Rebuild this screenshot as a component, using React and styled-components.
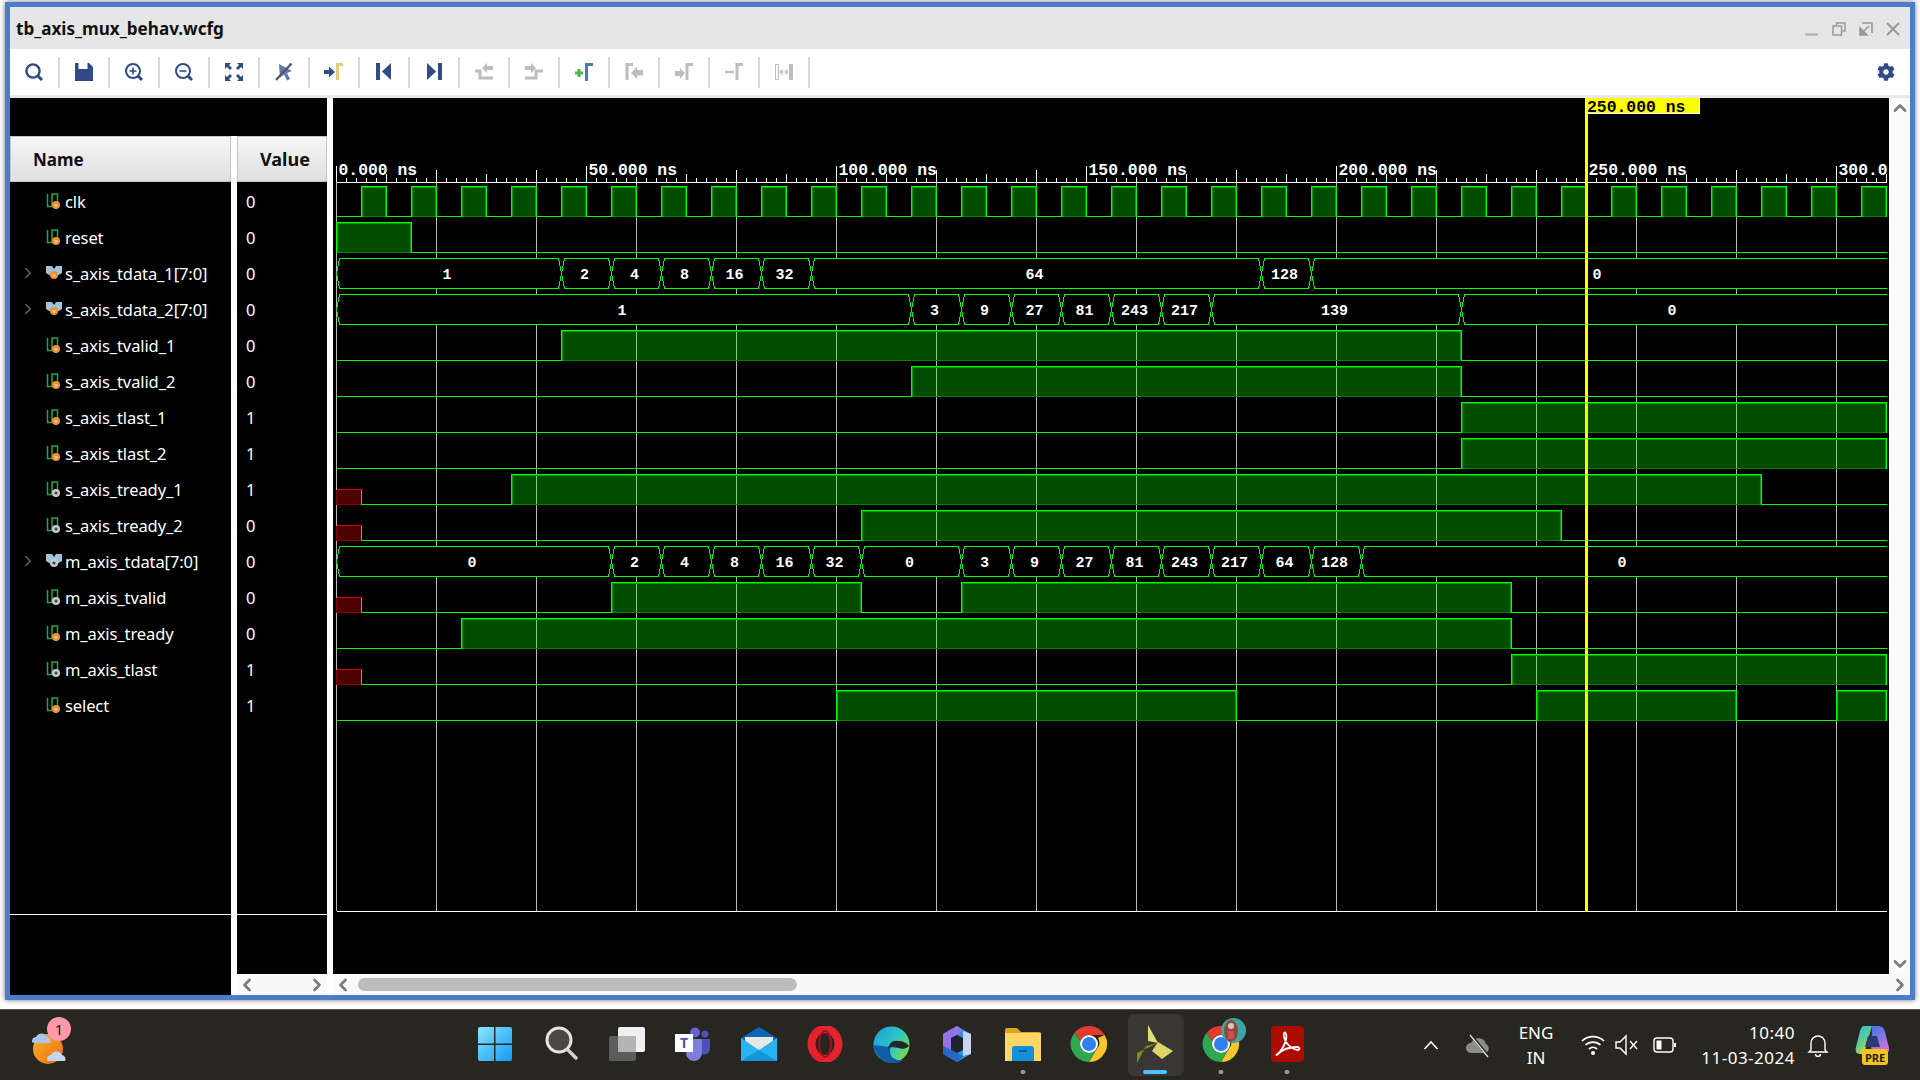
import React from "react";
import styled, { createGlobalStyle } from "styled-components";
import { ChevronLeft, ChevronRight, ChevronUp, ChevronDown } from "lucide-react";
import { FaCog } from "react-icons/fa";

const GlobalStyle = createGlobalStyle`
  html, body {
    margin: 0;
    padding: 0;
    background: #ffffff;
    overflow: hidden;
  }
  * { box-sizing: border-box; }
`;

const NAVY = "#2f4a85";
const GREY = "#bdbdbd";
const UI_FONT = `"Noto Sans", "Open Sans", sans-serif`;
const MONO = `"Liberation Mono", "DejaVu Sans Mono", monospace`;

const Page = styled.div`
  width: 1920px;
  height: 1080px;
  display: flex;
  flex-direction: column;
  font-family: ${UI_FONT};
`;
const Desktop = styled.div`
  height: 1009px;
  padding: 2px 5px 0;
  background: #ffffff;
`;
const Win = styled.div`
  height: 998px;
  border: 5px solid #4a7dcc;
  box-shadow: 0 0 5px rgba(0, 0, 0, 0.55);
  display: flex;
  flex-direction: column;
  background: #ffffff;
`;
const TitleBar = styled.div`
  height: 42px;
  background: #e6e6e6;
  display: flex;
  align-items: center;
  padding: 0 4px 0 6px;
`;
const Title = styled.div`
  font-weight: 700;
  font-size: 17.1px;
  color: #111;
  flex: 1;
`;
const WinControls = styled.div`
  display: flex;
  padding-top: 2px;
`;
const WinBtn = styled.div`
  width: 27px;
  height: 20px;
  display: flex;
  align-items: center;
  justify-content: center;
`;
const Toolbar = styled.div`
  height: 46px;
  display: flex;
  align-items: center;
  background: #ffffff;
`;
const ToolBtn = styled.div`
  width: 50px;
  height: 31px;
  display: flex;
  align-items: center;
  justify-content: center;
  border-right: 2px solid #d9d9d9;
`;
const ToolEnd = styled.div`
  margin-left: auto;
  margin-right: 15px;
  display: flex;
`;
const Divider = styled.div`
  height: 3px;
  background: #e8e8e8;
`;
const Body = styled.div`
  flex: 1;
  display: flex;
  gap: 6px;
  background: #ffffff;
  min-height: 0;
`;
const TreeSide = styled.div`
  width: 317px;
  flex: none;
  display: flex;
  flex-direction: column;
`;
const TreeTop = styled.div`
  height: 38px;
  flex: none;
  background: #000;
`;
const TreePanes = styled.div`
  flex: 1;
  display: flex;
  gap: 6px;
  min-height: 0;
`;
const Pane = styled.div`
  width: ${(p) => p.$w}px;
  display: flex;
  flex-direction: column;
  background: #000;
`;
const Header = styled.div`
  height: 46px;
  flex: none;
  background: linear-gradient(#f6f6f6, #dfdfdf);
  border: 1px solid #c4c4c4;
  font-weight: 700;
  font-size: ${(p) => p.$size}px;
  color: #111;
  display: flex;
  align-items: center;
  padding-left: ${(p) => p.$pad}px;
`;
const Rows = styled.div`
  padding-top: 1px;
  height: 732px;
  flex: none;
`;
const Row = styled.div`
  height: 36px;
  display: flex;
  align-items: center;
  color: #fff;
  font-size: 16.5px;
`;
const Twist = styled.div`
  width: 36px;
  display: flex;
  justify-content: flex-end;
  padding-right: 9px;
  color: #6e6e6e;
  height: 18px;
  align-items: center;
`;
const SigLabel = styled.span`
  margin-left: 3px;
  letter-spacing: -0.1px;
`;
const ValueRow = styled(Row)`
  padding-left: 9px;
`;
const PaneFoot = styled.div`
  flex: 1;
  border-top: 1px solid #fff;
`;
const HScroll = styled.div`
  height: 21px;
  flex: none;
  background: #f9f9f9;
  display: flex;
  align-items: center;
  justify-content: space-between;
  color: #7a7a7a;
`;
const WaveCol = styled.div`
  flex: 1;
  display: flex;
  flex-direction: column;
  min-width: 0;
`;
const WaveTop = styled.div`
  flex: 1;
  display: flex;
  min-height: 0;
`;
const VScroll = styled.div`
  width: 21px;
  background: #fbfbfb;
  display: flex;
  flex-direction: column;
  justify-content: space-between;
  align-items: center;
  color: #7a7a7a;
`;
const Thumb = styled.div`
  width: 439px;
  height: 13px;
  border-radius: 7px;
  background: #bcbcbc;
  margin-left: 5px;
`;
const ThumbTrack = styled.div`
  flex: 1;
  display: flex;
`;

const Taskbar = styled.div`
  height: 71px;
  background: #282620;
  border-top: 1px solid #55534e;
  display: flex;
  align-items: center;
  color: #fff;
`;
const Weather = styled.div`
  width: 462px;
  padding-left: 30px;
  height: 70px;
  display: flex;
  align-items: center;
`;
const WeatherIcon = styled.div`
  position: relative;
  width: 40px;
  height: 46px;
  margin-top: 6px;
`;
const Badge = styled.div`
  position: absolute;
  left: 17px;
  top: -8px;
  width: 24px;
  height: 24px;
  border-radius: 50%;
  background: #ff98a8;
  color: #1c1c1c;
  font-size: 15px;
  line-height: 24px;
  text-align: center;
`;
const AppSlot = styled.div`
  position: relative;
  width: 66px;
  height: 70px;
  display: flex;
  align-items: center;
  justify-content: center;
  padding-bottom: 2px;
`;
const ActiveBg = styled.div`
  position: absolute;
  left: 6px;
  right: 6px;
  top: 4px;
  bottom: 4px;
  border-radius: 6px;
  background: #393733;
  box-shadow: 2px 0 0 #33312d;
`;
const RunDot = styled.div`
  position: absolute;
  bottom: 6px;
  left: 50%;
  transform: translateX(-50%);
  height: 4px;
  width: ${(p) => (p.$active ? 24 : 5)}px;
  border-radius: 3px;
  background: ${(p) => (p.$active ? "#4cc2ff" : "#9a9a9a")};
`;
const SlotIcon = styled.div`
  position: relative;
  display: flex;
`;
const Tray = styled.div`
  margin-left: 95px;
  display: flex;
  align-items: center;
  height: 70px;
`;
const TrayItem = styled.div`
  width: ${(p) => p.$w}px;
  margin-left: ${(p) => p.$ml || 0}px;
  display: flex;
  justify-content: center;
  align-items: center;
`;
const TrayText = styled.div`
  width: ${(p) => p.$w}px;
  margin-left: ${(p) => p.$ml || 0}px;
  text-align: ${(p) => p.$align};
  font-size: 17px;
  letter-spacing: ${(p) => p.$spacing || 0}px;
  line-height: 25px;
  color: #fff;
`;

/* ---------- waveform data ---------- */

const X = (t) => 336.5 + 5 * t;
const END = 310;
const BRIGHT = "#00ff00";

const BITS = {
  4: { high: [[45, 225]] },
  5: { high: [[115, 225]] },
  6: { high: [[225, 310]] },
  7: { high: [[225, 310]] },
  8: { unk: true, high: [[35, 285]] },
  9: { unk: true, high: [[105, 245]] },
  11: { unk: true, high: [[55, 105], [125, 235]] },
  12: { high: [[25, 235]] },
  13: { unk: true, high: [[235, 310]] },
  14: { high: [[100, 180], [240, 280], [300, 310]] },
  1: { high: [[0, 15]] },
  0: { high: Array.from({ length: 31 }, (_, i) => [5 + i * 10, 10 + i * 10]) },
};

const seq = (start, vals, step = 10) => vals.map((v, i) => [start + i * step, start + (i + 1) * step, v]);

const BUSES = {
  2: [[0, 45, "1"], ...seq(45, ["2", "4", "8", "16", "32"]), [95, 185, "64"], [185, 195, "128"], [195, 310, "0"]],
  3: [[0, 115, "1"], ...seq(115, ["3", "9", "27", "81", "243", "217"]), [175, 225, "139"], [225, 310, "0"]],
  10: [
    [0, 55, "0"],
    ...seq(55, ["2", "4", "8", "16", "32"]),
    [105, 125, "0"],
    ...seq(125, ["3", "9", "27", "81", "243", "217", "64", "128"]),
    [205, 310, "0"],
  ],
};

const SIGNALS = [
  { name: "clk", kind: "v", val: 0 },
  { name: "reset", kind: "v", val: 0 },
  { name: "s_axis_tdata_1[7:0]", kind: "bv", val: 0 },
  { name: "s_axis_tdata_2[7:0]", kind: "bv", val: 0 },
  { name: "s_axis_tvalid_1", kind: "v", val: 0 },
  { name: "s_axis_tvalid_2", kind: "v", val: 0 },
  { name: "s_axis_tlast_1", kind: "v", val: 1 },
  { name: "s_axis_tlast_2", kind: "v", val: 1 },
  { name: "s_axis_tready_1", kind: "g", val: 1 },
  { name: "s_axis_tready_2", kind: "g", val: 0 },
  { name: "m_axis_tdata[7:0]", kind: "bg", val: 0 },
  { name: "m_axis_tvalid", kind: "g", val: 0 },
  { name: "m_axis_tready", kind: "v", val: 0 },
  { name: "m_axis_tlast", kind: "g", val: 1 },
  { name: "select", kind: "v", val: 1 },
];

function BitRow({ row, high, unk }) {
  const top = 186.5 + 36 * row;
  const low = top + 30;
  const start = unk ? 5 : 0;
  const lows = [];
  let cur = start;
  high.forEach(([a, b]) => {
    if (a > cur) lows.push([cur, a]);
    cur = b;
  });
  if (cur < END) lows.push([cur, END]);
  return (
    <g>
      {unk && (
        <g>
          <rect x={X(0)} y={top + 15} width={25} height={15} fill="#4d0000" />
          <path d={`M${X(0)} ${low}H${X(5)}M${X(0)} ${top + 15}V${low}`} stroke="#8a0000" fill="none" />
          <path d={`M${X(0)} ${top + 15}H${X(5)}`} stroke="#e00000" fill="none" />
          <path d={`M${X(5)} ${top + 15}V${low}`} stroke={BRIGHT} fill="none" />
        </g>
      )}
      {lows.map(([a, b]) => (
        <path key={a} d={`M${X(a)} ${low}H${X(b)}`} stroke={BRIGHT} fill="none" />
      ))}
      {high.map(([a, b]) => (
        <g key={a}>
          <rect x={X(a)} y={top} width={X(b) - X(a)} height={30} fill="rgba(0,255,0,0.3)" />
          <path d={`M${X(a)} ${low}H${X(b)}`} stroke="#0a800a" fill="none" />
          <path
            d={`M${X(a) + 1} ${low}V${top + 1}H${X(b) - 1}V${low}`}
            stroke="#00a000"
            fill="none"
          />
          <path d={`M${X(a)} ${low}V${top}H${X(b)}V${low}`} stroke={BRIGHT} fill="none" />
        </g>
      ))}
    </g>
  );
}

function BusRow({ row, segs }) {
  const top = 186.5 + 36 * row;
  const bot = top + 30;
  const mid = top + 15;
  return (
    <g>
      {segs.map(([a, b]) => {
        const l = X(a);
        const r = X(b);
        const d =
          b === END
            ? `M${r} ${top}H${l + 3}L${l} ${mid}L${l + 3} ${bot}H${r}`
            : `M${l} ${mid}L${l + 3} ${top}H${r - 3}L${r} ${mid}L${r - 3} ${bot}H${l + 3}Z`;
        return <path key={a} d={d} fill="#000" stroke={BRIGHT} />;
      })}
    </g>
  );
}

function BusLabels({ row, segs }) {
  const base = 186.5 + 36 * row + 20;
  return (
    <g fontFamily={MONO} fontWeight="700" fontSize="15" fill="#fff" textAnchor="middle">
      {segs.map(([a, b, v]) => (
        <text key={a} x={(X(a) + X(b)) / 2 - 2} y={base}>
          {v}
        </text>
      ))}
    </g>
  );
}

function Ticks() {
  let d = "";
  for (let t = 0; t <= END; t += 2) {
    let from = 178;
    if (t % 50 === 0) from = 166;
    else if (t % 100 === 60) from = 177;
    else if (t % 20 === 0) from = 170;
    else if (t % 10 === 0) from = 174;
    d += `M${X(t)} ${from}V182`;
  }
  return <path d={d} stroke="#fff" fill="none" />;
}

function Waves() {
  const labels = ["0.000 ns", "50.000 ns", "100.000 ns", "150.000 ns", "200.000 ns", "250.000 ns", "300.0"];
  const grid = [];
  for (let t = 0; t <= 300; t += 20) grid.push(t);
  return (
    <svg width="1556" height="876" viewBox="333 98 1556 876" style={{ display: "block", background: "#000" }}>
      <g shapeRendering="crispEdges">
        {grid.map((t) => (
          <path key={t} d={`M${X(t)} 182V911`} stroke="#b8b8b8" fill="none" />
        ))}
        <path d={`M${X(0)} 911.5H${X(END)}M${X(0)} 182.5H${X(END)}`} stroke="#fff" fill="none" />
        <Ticks />
        {Object.entries(BITS).map(([row, b]) => (
          <BitRow key={row} row={Number(row)} high={b.high} unk={b.unk} />
        ))}
        {Object.entries(BUSES).map(([row, segs]) => (
          <BusRow key={row} row={Number(row)} segs={segs} />
        ))}
      </g>
      {Object.entries(BUSES).map(([row, segs]) => (
        <BusLabels key={row} row={Number(row)} segs={segs} />
      ))}
      <g fontFamily={MONO} fontWeight="700" fontSize="16.4" fill="#fff">
        {labels.map((label, i) => (
          <text key={label} x={X(i * 50) + 2} y={175}>
            {label}
          </text>
        ))}
      </g>
      <rect x="1585" y="98" width="3" height="814" fill="#ffff00" shapeRendering="crispEdges" />
      <rect x="1585.5" y="97.5" width="114" height="16" fill="#ffff00" stroke="#fff" shapeRendering="crispEdges" />
      <text x="1587" y="112" fontFamily={MONO} fontWeight="700" fontSize="16.4" fill="#000">
        250.000 ns
      </text>
    </svg>
  );
}

/* ---------- small icons ---------- */

function SignalIcon({ kind }) {
  const orange = kind === "v" || kind === "bv";
  const bus = kind[0] === "b";
  return (
    <svg width="16" height="17" viewBox="0 0 16 17">
      {bus ? (
        <path d="M0 1h6l2 3 2-3h6v7l-5 3H5L0 8z" fill="#9dc4dc" />
      ) : (
        <path d="M1.500 1v12.500H6V1h5.500v9M5 1h0" stroke="#22a83f" strokeWidth="1.500" fill="none" />
      )}
      <circle cx={bus ? 8 : 10} cy={bus ? 10 : 12} r="4" fill={orange ? "#f0912a" : "#c8c8c8"} />
      {orange ? (
        <text x={bus ? 8 : 10} y={bus ? 12 : 14} fontSize="6" textAnchor="middle" fill="#fff" fontFamily={UI_FONT}>
          v
        </text>
      ) : (
        <circle cx={bus ? 8 : 10} cy={bus ? 10 : 12} r="1.600" fill="#444" />
      )}
    </svg>
  );
}

const Ic = ({ children, w = 20, h = 20 }) => (
  <svg width={w} height={h} viewBox={`0 0 ${w} ${h}`}>
    {children}
  </svg>
);

const TOOL_ICONS = [
  <Ic key="find">
    <circle cx="9" cy="9" r="6.600" stroke={NAVY} strokeWidth="2.400" fill="none" />
    <path d="M13.500 13.500L18 18" stroke={NAVY} strokeWidth="3" />
  </Ic>,
  <Ic key="save">
    <path d="M1 1h3.500v6h9V1H15l4 4v14H1z" fill={NAVY} />
  </Ic>,
  <Ic key="in">
    <circle cx="9" cy="9" r="7" stroke={NAVY} strokeWidth="2" fill="none" />
    <path d="M5.500 9h7M9 5.500v7" stroke={NAVY} strokeWidth="1.600" />
    <path d="M14 14l4 4" stroke={NAVY} strokeWidth="3" />
  </Ic>,
  <Ic key="out">
    <circle cx="9" cy="9" r="7" stroke={NAVY} strokeWidth="2" fill="none" />
    <path d="M5.500 9h7" stroke={NAVY} strokeWidth="1.600" />
    <path d="M14 14l4 4" stroke={NAVY} strokeWidth="3" />
  </Ic>,
  <Ic key="fit">
    <path
      d="M1 1h6L5 3l3 3-2 2-3-3-2 2zM19 1v6l-2-2-3 3-2-2 3-3-2-2zM1 19v-6l2 2 3-3 2 2-3 3 2 2zM19 19h-6l2-2-3-3 2-2 3 3 2-2z"
      fill={NAVY}
    />
  </Ic>,
  <Ic key="cross">
    <path d="M5 2l13 7-5 2 3 6-3 1.500-3-6-4 3z" fill="#5f78ad" />
    <path d="M17.500 1.500L2 18" stroke="#5a5a5a" strokeWidth="2.400" />
  </Ic>,
  <Ic key="markerIn">
    <path d="M0 8h5V4.500l6 5.500-6 5.500V12H0z" fill={NAVY} />
    <path d="M13.500 18V2.500H19" stroke="#e3cd78" strokeWidth="3" fill="none" />
  </Ic>,
  <Ic key="first">
    <path d="M2 1h4v17H2z" fill={NAVY} />
    <path d="M17 1v17L8 9.500z" fill={NAVY} />
  </Ic>,
  <Ic key="last">
    <path d="M14 1h4v17h-4z" fill={NAVY} />
    <path d="M3 1v17l9-8.500z" fill={NAVY} />
  </Ic>,
  <Ic key="prevTr">
    <path d="M1 9h5v7h13" stroke={GREY} strokeWidth="3" fill="none" />
    <path d="M19 4h-6V1L8 6l5 5V8h6z" fill={GREY} />
  </Ic>,
  <Ic key="nextTr">
    <path d="M1 16h11V9h7" stroke={GREY} strokeWidth="3" fill="none" />
    <path d="M1 4h6V1l5 5-5 5V8H1z" fill={GREY} />
  </Ic>,
  <Ic key="addMarker">
    <path d="M1 11h8M5 7v8" stroke="#4cb84c" strokeWidth="3" fill="none" />
    <path d="M12.500 19V2.500H19" stroke="#3d7fb5" strokeWidth="3" fill="none" />
  </Ic>,
  <Ic key="prevMarker">
    <path d="M3 18V2.500H9" stroke={GREY} strokeWidth="3" fill="none" />
    <path d="M19 8h-6V4.500L7 11l6 6v-3.500h6z" fill={GREY} />
  </Ic>,
  <Ic key="nextMarker">
    <path d="M13 18V2.500H19" stroke={GREY} strokeWidth="3" fill="none" />
    <path d="M1 9h5V6l5 5-5 6v-3H1z" fill={GREY} />
  </Ic>,
  <Ic key="delMarker">
    <path d="M1 10h9" stroke={GREY} strokeWidth="2.400" fill="none" />
    <path d="M13 18V2.500H19" stroke={GREY} strokeWidth="3" fill="none" />
  </Ic>,
  <Ic key="swap">
    <path d="M1.500 2.500h3v15h-3z" stroke={GREY} strokeWidth="1" fill="none" />
    <path d="M15 2h4v16h-4z" fill={GREY} />
    <path d="M6 10h8M6 10l2.500-2.500M6 10l2.500 2.500M14 10l-2.500-2.500M14 10l-2.500 2.500" stroke={GREY} strokeWidth="1.200" fill="none" />
  </Ic>,
];

const Chrome = () => (
  <svg width="38" height="38" viewBox="0 0 38 38">
    <path d="M19 1a18 18 0 0 1 15.600 9H19a9 9 0 0 0-8.400 5.600L4.500 8A18 18 0 0 1 19 1z" fill="#e33b2e" />
    <path d="M34.600 10A18 18 0 0 1 19 37l8-13.500A9 9 0 0 0 28 13z" fill="#f7c52c" />
    <path d="M4.500 8A18 18 0 0 0 19 37l7.500-13A9 9 0 0 1 10.500 16z" fill="#2da94f" />
    <circle cx="19" cy="19" r="9" fill="#fff" />
    <circle cx="19" cy="19" r="7" fill="#2f80ed" />
  </svg>
);

const TASK_ICONS = [
  <svg key="start" width="36" height="36" viewBox="0 0 36 36">
    <defs>
      <linearGradient id="st" x1="0" y1="0" x2="1" y2="1">
        <stop offset="0" stopColor="#8be4ff" />
        <stop offset="1" stopColor="#0f9bf5" />
      </linearGradient>
    </defs>
    <path d="M1 3a2 2 0 0 1 2-2h14v16.500H1zM18.500 1H33a2 2 0 0 1 2 2v14.500H18.500zM1 19h16v16H3a2 2 0 0 1-2-2zM18.500 19H35v14a2 2 0 0 1-2 2H18.500z" fill="url(#st)" />
  </svg>,
  <svg key="search" width="34" height="36" viewBox="0 0 34 36">
    <circle cx="15" cy="14" r="12" fill="#4a4945" stroke="#e4e4e4" strokeWidth="3" />
    <path d="M24 24l8 8" stroke="#d0d0d0" strokeWidth="3.500" strokeLinecap="round" />
  </svg>,
  <svg key="task" width="36" height="34" viewBox="0 0 36 34">
    <rect x="0" y="9" width="27" height="25" rx="2" fill="#5c5c5c" />
    <rect x="9" y="0" width="27" height="25" rx="2" fill="#f0f0f0" />
    <path d="M9 9h18v16H11a2 2 0 0 1-2-2z" fill="#b4b4b4" />
  </svg>,
  <svg key="teams" width="36" height="34" viewBox="0 0 36 34">
    <circle cx="20" cy="5.500" r="5" fill="#6264c9" />
    <circle cx="30" cy="7" r="3.500" fill="#4d50b8" />
    <path d="M25 12h10v10a6 6 0 0 1-10 4z" fill="#4d50b8" />
    <path d="M11 12h16v14a8 8 0 0 1-16 0z" fill="#7b7fd8" />
    <rect x="0" y="7" width="18" height="18" fill="#fff" />
    <text x="9" y="21" fontFamily={UI_FONT} fontWeight="700" fontSize="14" textAnchor="middle" fill="#4b53bc">T</text>
  </svg>,
  <svg key="mail" width="36" height="34" viewBox="0 0 36 34">
    <path d="M0 11L18 0l18 11v4H0z" fill="#0a64b8" />
    <path d="M4 10h28v8L18 26 4 18z" fill="#e8e8e8" />
    <path d="M0 11l18 12 18-12v23H0z" fill="#28b4f0" />
    <path d="M0 34l18-11 18 11z" fill="#1593dc" />
  </svg>,
  <svg key="opera" width="36" height="36" viewBox="0 0 36 36">
    <ellipse cx="18" cy="18" rx="13.500" ry="15" fill="none" stroke="#e5222f" strokeWidth="8" />
    <ellipse cx="18" cy="18" rx="6" ry="13" fill="none" stroke="#a80f1c" strokeWidth="2" />
  </svg>,
  <svg key="edge" width="37" height="37" viewBox="0 0 37 37">
    <defs>
      <linearGradient id="ed" x1="0" y1="0" x2="1" y2="0.6">
        <stop offset="0" stopColor="#1d9ed8" />
        <stop offset="0.6" stopColor="#2cc5c8" />
        <stop offset="1" stopColor="#6fdc5c" />
      </linearGradient>
    </defs>
    <circle cx="18.500" cy="18.500" r="18" fill="url(#ed)" />
    <path d="M0.500 19C2 30 11 37 19 37c6 0 9-1 11-3-5 1-13-1-13-9 0-5 5-7 9-6 5 1 10 0 10-1l-1 2c-3 4-7 3-10 2z" fill="#0e5ea8" />
    <path d="M36 20c-3 3-7 3-13 1-4-1-8 0-8 4 0-8 5-11 10-10 5 0 9 2 11 5z" fill="#282620" />
  </svg>,
  <svg key="m365" width="32" height="38" viewBox="0 0 32 38">
    <path d="M16 1l14 8v20l-14 8-14-8V9z" fill="#2f8fe0" />
    <path d="M16 1L2 9v12l8 4V13l12-7z" fill="#9a72e8" />
    <path d="M2 21l8 4 12 6-6 6-14-8z" fill="#2468c8" />
    <path d="M22 6l8 3v20l-8 2z" fill="#c8d4f4" />
    <path d="M10 13l6-3 6 3v12l-6 3-6-3z" fill="#20242c" />
  </svg>,
  <svg key="folder" width="36" height="34" viewBox="0 0 36 34">
    <path d="M0 3a2 2 0 0 1 2-2h10l4 4h18a2 2 0 0 1 2 2v4H0z" fill="#e0a020" />
    <path d="M0 6h36v28H0z" fill="#fcd768" />
    <path d="M7 22a3 3 0 0 1 3-3h16a3 3 0 0 1 3 3v12H7z" fill="#1290d8" />
    <path d="M14 24h8" stroke="#0b5c96" strokeWidth="2" />
  </svg>,
  <Chrome key="chrome" />,
  <svg key="vivado" width="36" height="38" viewBox="0 0 36 38">
    <path d="M11 0l10 18-10-2z" fill="#e4de78" />
    <path d="M21 18L0 28l0 10 9-17z" fill="#8a8a14" />
    <path d="M21 17l15 9-11 8-10-8z" fill="#dcd868" />
  </svg>,
  <SlotIcon key="chrome2">
    <Chrome />
    <svg width="25" height="25" viewBox="0 0 25 25" style={{ position: "absolute", left: 19, top: -7 }}>
      <circle cx="12.500" cy="12.500" r="12.500" fill="#3aa6a8" />
      <ellipse cx="10" cy="13" rx="7" ry="11" fill="#8e4a3c" />
      <circle cx="10" cy="8" r="3" fill="#e0c4b0" />
      <path d="M7 13h6v8H7z" fill="#d04a5a" />
    </svg>
  </SlotIcon>,
  <svg key="acrobat" width="33" height="36" viewBox="0 0 33 36">
    <rect width="33" height="36" rx="4" fill="#ae0b00" />
    <path d="M5 29c6-3 12-16 10-21-1-3-3-1-2 3 1 5 6 12 14 13 2 0 2-3-1-3-6 0-14 2-19 7-1 1-2 1-2 1z" fill="none" stroke="#fff" strokeWidth="1.800" />
  </svg>,
];

const WeatherArt = () => (
  <svg width="40" height="46" viewBox="0 0 40 46">
    <defs>
      <linearGradient id="sun" x1="0" y1="0" x2="1" y2="1">
        <stop offset="0" stopColor="#f8b526" />
        <stop offset="1" stopColor="#ec6a10" />
      </linearGradient>
    </defs>
    <circle cx="18" cy="24" r="15" fill="url(#sun)" />
    <path d="M2 17a4 4 0 0 1 4-5 6 6 0 0 1 11 0 4 4 0 0 1 3 6H4a3 3 0 0 1-2-1z" fill="#a8c6f0" />
    <path d="M17 35a4 4 0 0 1 4-5 6 6 0 0 1 11 0 4 4 0 0 1 3 6H19a3 3 0 0 1-2-1z" fill="#c0d6f4" />
  </svg>
);

export default function App() {
  return (
    <Page>
      <GlobalStyle />
      <Desktop>
        <Win>
          <TitleBar>
            <Title>tb_axis_mux_behav.wcfg</Title>
            <WinControls>
              <WinBtn>
                <svg width="14" height="14" viewBox="0 0 14 14">
                  <path d="M0 12.500h13" stroke="#aaa" strokeWidth="2" />
                </svg>
              </WinBtn>
              <WinBtn>
                <svg width="14" height="14" viewBox="0 0 14 14">
                  <path d="M4.500 3V1h8.500v8h-2.500M1 4h8.500v9H1z" stroke="#999" strokeWidth="1.500" fill="none" />
                </svg>
              </WinBtn>
              <WinBtn>
                <svg width="14" height="14" viewBox="0 0 14 14">
                  <path d="M3 1h10v10" stroke="#999" strokeWidth="1.600" fill="none" />
                  <path d="M10 4L3 11M1 6v7h7z" stroke="#999" strokeWidth="1.600" fill="#999" />
                </svg>
              </WinBtn>
              <WinBtn>
                <svg width="14" height="14" viewBox="0 0 14 14">
                  <path d="M1 1l12 12M13 1L1 13" stroke="#999" strokeWidth="2" />
                </svg>
              </WinBtn>
            </WinControls>
          </TitleBar>
          <Toolbar>
            {TOOL_ICONS.map((icon) => (
              <ToolBtn key={icon.key}>{icon}</ToolBtn>
            ))}
            <ToolEnd>
              <FaCog size={18} color={NAVY} />
            </ToolEnd>
          </Toolbar>
          <Divider />
          <Body>
            <TreeSide>
              <TreeTop />
              <TreePanes>
                <Pane $w={221}>
                  <Header $pad={22} $size={17}>Name</Header>
                  <Rows>
                    {SIGNALS.map((s) => (
                      <Row key={s.name}>
                        <Twist>{s.kind[0] === "b" && <ChevronRight size={18} strokeWidth={1.600} />}</Twist>
                        <SignalIcon kind={s.kind} />
                        <SigLabel>{s.name}</SigLabel>
                      </Row>
                    ))}
                  </Rows>
                  <PaneFoot />
                </Pane>
                <Pane $w={90}>
                  <Header $pad={22} $size={18}>Value</Header>
                  <Rows>
                    {SIGNALS.map((s) => (
                      <ValueRow key={s.name}>{s.val}</ValueRow>
                    ))}
                  </Rows>
                  <PaneFoot />
                  <HScroll>
                    <ChevronLeft size={20} strokeWidth={3.200} />
                    <ChevronRight size={20} strokeWidth={3.200} />
                  </HScroll>
                </Pane>
              </TreePanes>
            </TreeSide>
            <WaveCol>
              <WaveTop>
                <Waves />
                <VScroll>
                  <ChevronUp size={20} strokeWidth={3.200} />
                  <ChevronDown size={20} strokeWidth={3.200} />
                </VScroll>
              </WaveTop>
              <HScroll>
                <ChevronLeft size={20} strokeWidth={3.200} />
                <ThumbTrack>
                  <Thumb />
                </ThumbTrack>
                <ChevronRight size={20} strokeWidth={3.200} />
              </HScroll>
            </WaveCol>
          </Body>
        </Win>
      </Desktop>
      <Taskbar>
        <Weather>
          <WeatherIcon>
            <WeatherArt />
            <Badge>1</Badge>
          </WeatherIcon>
        </Weather>
        {TASK_ICONS.map((icon) => (
          <AppSlot key={icon.key}>
            {icon.key === "vivado" && <ActiveBg />}
            <SlotIcon>{icon}</SlotIcon>
            {["folder", "vivado", "chrome2", "acrobat"].includes(icon.key) && <RunDot $active={icon.key === "vivado"} />}
          </AppSlot>
        ))}
        <Tray>
          <TrayItem $w={32}>
            <svg width="16" height="10" viewBox="0 0 16 10">
              <path d="M1.500 9L8 2l6.500 7" stroke="#fff" strokeWidth="1.600" fill="none" />
            </svg>
          </TrayItem>
          <TrayItem $w={64}>
            <svg width="26" height="26" viewBox="0 0 26 26">
              <path d="M5 21a5 5 0 0 1 0-10 8 8 0 0 1 15 1 5 5 0 0 1 0 9z" fill="#8c8c8c" />
              <path d="M4 2l18 22" stroke="#282620" strokeWidth="3" />
              <path d="M4 3l18 22" stroke="#e0e0e0" strokeWidth="1.300" />
            </svg>
          </TrayItem>
          <TrayText $w={50} $align="center">
            ENG
            <br />
            IN
          </TrayText>
          <TrayItem $w={34} $ml={15}>
            <svg width="24" height="22" viewBox="0 0 24 22">
              <path d="M1 7a16 16 0 0 1 22 0M4.500 11a11 11 0 0 1 15 0M8 15a6 6 0 0 1 8 0" stroke="#fff" strokeWidth="1.700" fill="none" />
              <circle cx="12" cy="19" r="2" fill="#fff" />
            </svg>
          </TrayItem>
          <TrayItem $w={34}>
            <svg width="24" height="22" viewBox="0 0 24 22">
              <path d="M1 8h4l6-6v18l-6-6H1z" stroke="#fff" strokeWidth="1.400" fill="none" />
              <path d="M15 7l7 8M22 7l-7 8" stroke="#fff" strokeWidth="1.400" />
            </svg>
          </TrayItem>
          <TrayItem $w={34} $ml={4}>
            <svg width="24" height="18" viewBox="0 0 24 18">
              <rect x="1" y="2" width="19" height="14" rx="3" stroke="#fff" strokeWidth="1.400" fill="none" />
              <rect x="3.500" y="4.500" width="5" height="9" fill="#fff" />
              <path d="M22 7v4" stroke="#fff" strokeWidth="2" />
            </svg>
          </TrayItem>
          <TrayText $w={110} $ml={3} $align="right" $spacing={0.5}>
            10:40
            <br />
            11-03-2024
          </TrayText>
          <TrayItem $w={34} $ml={6}>
            <svg width="22" height="24" viewBox="0 0 22 24">
              <path d="M4 17V10a7 7 0 0 1 14 0v7l2 2H2z" stroke="#fff" strokeWidth="1.400" fill="none" />
              <path d="M8.500 21a2.500 2.500 0 0 0 5 0" stroke="#fff" strokeWidth="1.400" fill="none" />
            </svg>
          </TrayItem>
          <TrayItem $w={48} $ml={13}>
            <SlotIcon>
              <svg width="36" height="40" viewBox="0 0 36 40">
                <defs>
                  <linearGradient id="cpl" x1="0" y1="0" x2="0.6" y2="1">
                    <stop offset="0" stopColor="#2fb6f0" />
                    <stop offset="0.6" stopColor="#5fd08a" />
                    <stop offset="1" stopColor="#f0d040" />
                  </linearGradient>
                  <linearGradient id="cpr" x1="0" y1="0" x2="0.4" y2="1">
                    <stop offset="0" stopColor="#3a78e8" />
                    <stop offset="1" stopColor="#d070e0" />
                  </linearGradient>
                </defs>
                <path d="M10 1h8L10 29H6c-4 0-5-3-4-7l4-16c1-3 2-5 4-5z" fill="url(#cpl)" />
                <path d="M18 1h7c3 0 5 2 6 6l4 16c1 3-2 6-5 6H17z" fill="url(#cpr)" />
                <path d="M14 11h9l3 11H11z" fill="#2b3a70" />
                <rect x="8" y="24" width="26" height="16" rx="3" fill="#f6c21c" />
                <text x="21" y="36.500" fontFamily={UI_FONT} fontWeight="700" fontSize="11" textAnchor="middle" fill="#222">PRE</text>
              </svg>
            </SlotIcon>
          </TrayItem>
        </Tray>
      </Taskbar>
    </Page>
  );
}
